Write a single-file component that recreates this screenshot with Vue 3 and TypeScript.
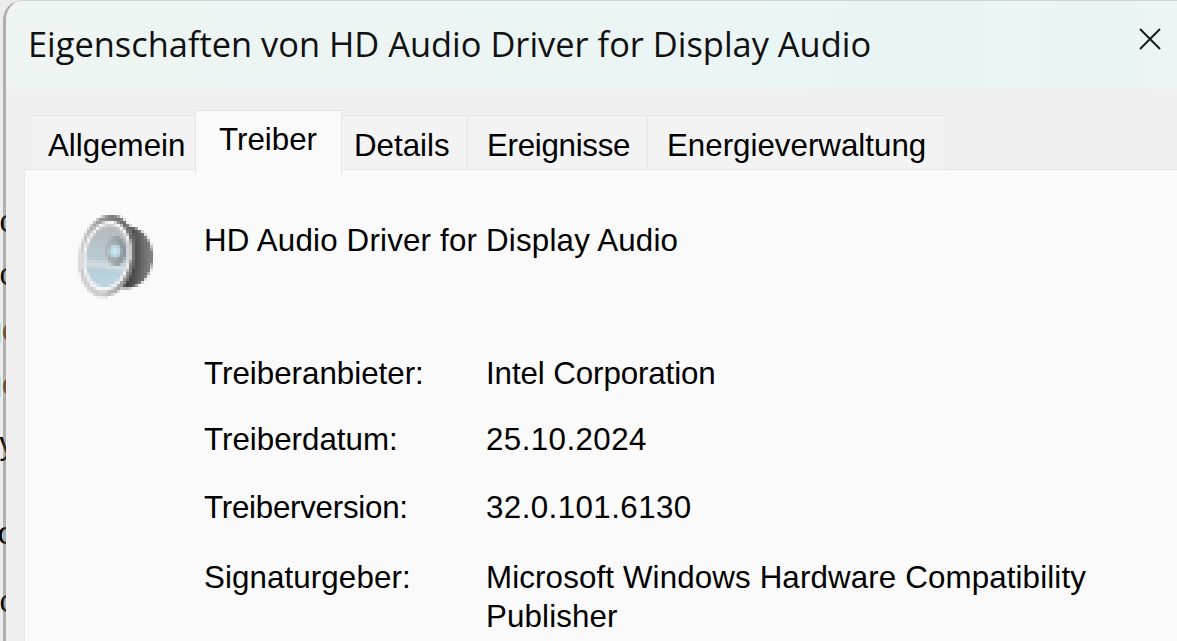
<script setup lang="ts">
interface InfoRow {
  label: string
  value: string
  numeric?: boolean
}

interface TabItem {
  name: string
  width: number
  pad: number
}

interface Cell {
  x: number
  y: number
  fill: string
}

const tabs: TabItem[] = [
  { name: 'Allgemein', width: 166, pad: 17 },
  { name: 'Treiber', width: 147, pad: 23 },
  { name: 'Details', width: 127, pad: 12 },
  { name: 'Ereignisse', width: 181, pad: 19 },
  { name: 'Energieverwaltung', width: 299, pad: 19 }
]
const activeTab = 'Treiber'

const rows: InfoRow[] = [
  { label: 'Treiberanbieter:', value: 'Intel Corporation' },
  { label: 'Treiberdatum:', value: '25.10.2024', numeric: true },
  { label: 'Treiberversion:', value: '32.0.101.6130', numeric: true },
  { label: 'Signaturgeber:', value: 'Microsoft Windows Hardware Compatibility Publisher' }
]

// text of the window behind, only its last pixels show
const behind = [
  { ch: 'c', top: 202 },
  { ch: 'c', top: 255 },
  { ch: 'o', top: 311, faint: true },
  { ch: 'o', top: 365, faint: true },
  { ch: 'y', top: 424 },
  { ch: 'o', top: 514 },
  { ch: 'c', top: 582 }
]
const cyanMarks = [315, 369]

type Rgba = [number, number, number, number]

const mix = (a: number[], b: number[], t: number) => {
  const k = Math.min(1, Math.max(0, t))
  return a.map((v, i) => v + (b[i] - v) * k)
}

// speaker sampled at icon coordinates (the original is an upscaled 32px bitmap)
const speakerAt = (px: number, py: number): Rgba => {
  const dx = px - 29
  const dy = py - 44
  const rx = dx * Math.cos(0.17) + dy * Math.sin(0.17)
  const ry = -dx * Math.sin(0.17) + dy * Math.cos(0.17)
  const r = Math.hypot(rx / 28, ry / 41.5)

  const capR = Math.hypot((px - 38) / 10, (py - 39) / 15)
  const spot = Math.hypot((px - 37) / 6, (py - 39) / 7)
  if (r < 0.75) {
    if (spot < 1) return [...mix([214, 238, 246], [176, 204, 216], spot), 255] as Rgba
    if (capR < 1) return [...mix([136, 146, 150], [172, 176, 180], 1 - (px - 30) / 18), 255] as Rgba
    const band = Math.exp(-Math.pow((py - 53 - (px - 25) * 0.12) / 3.5, 2)) * 0.6
    const base = mix([182, 186, 190], [186, 214, 226], (py - 15) / 60)
    return [...mix(base, [226, 232, 234], band), 255] as Rgba
  }
  if (r < 0.85) return [...mix([236, 238, 240], [250, 250, 250], (r - 0.75) / 0.1), 255] as Rgba
  if (r < 1) {
    const side = (px - 2 + (22 - py) * 0.35) / 46
    return [...mix([204, 204, 204], [112, 112, 112], side), 255] as Rgba
  }
  const back = Math.hypot((px - 48) / 27, (py - 45) / 31)
  if (back < 1) {
    const step = Math.floor((px - 46) / 6)
    const shade = mix([56, 56, 56], [128, 128, 128], step / 4 + (back - 0.6) * 0.3)
    return [...shade, 255] as Rgba
  }
  return [250, 250, 250, 0]
}

const cellSize = 3
const speakerCells: Cell[] = []
for (let y = 0; y < 29; y++) {
  for (let x = 0; x < 26; x++) {
    let sum = [0, 0, 0, 0]
    for (const sy of [0.5, 1.5, 2.5]) {
      for (const sx of [0.5, 1.5, 2.5]) {
        const c = speakerAt(x * cellSize + sx, y * cellSize + sy)
        sum = [sum[0] + c[0] * (c[3] ? 1 : 0), sum[1] + c[1] * (c[3] ? 1 : 0), sum[2] + c[2] * (c[3] ? 1 : 0), sum[3] + (c[3] ? 1 : 0)]
      }
    }
    if (sum[3] === 0) continue
    const n = sum[3]
    // blend partly covered cells with the panel colour
    const col = mix([250, 250, 250], [sum[0] / n, sum[1] / n, sum[2] / n], n / 9)
    speakerCells.push({
      x: x * cellSize,
      y: y * cellSize,
      fill: `rgb(${col.map((v) => Math.round(v)).join(',')})`
    })
  }
}
</script>

<template>
  <div class="screen">
    <div class="backdrop">
      <span
        v-for="(b, i) in behind"
        :key="i"
        class="behind-char"
        :class="{ faint: b.faint }"
        :style="{ top: b.top + 'px' }"
      >{{ b.ch }}</span>
      <span v-for="m in cyanMarks" :key="m" class="cyan-mark" :style="{ top: m + 'px' }"></span>
    </div>
    <div class="dialog">
      <header class="titlebar">
        <h1 class="title">Eigenschaften von HD Audio Driver for Display Audio</h1>
        <svg class="close" width="22" height="22" viewBox="0 0 22 22">
          <path d="M1 1 L21 21 M21 1 L1 21" stroke="#1a1a1a" stroke-width="2" fill="none" />
        </svg>
      </header>
      <div class="dialog-body">
        <div class="tabs">
          <div
            v-for="tab in tabs"
            :key="tab.name"
            class="tab"
            :class="{ active: tab.name === activeTab }"
            :style="{ width: tab.width + 'px', paddingLeft: tab.pad + 'px' }"
          >
            {{ tab.name }}
          </div>
        </div>
        <section class="panel">
          <div class="device">
            <svg class="speaker" width="78" height="87" viewBox="0 0 78 87" shape-rendering="crispEdges">
              <rect
                v-for="(c, i) in speakerCells"
                :key="i"
                :x="c.x"
                :y="c.y"
                width="3"
                height="3"
                :fill="c.fill"
              />
            </svg>
            <div class="device-name">HD Audio Driver for Display Audio</div>
          </div>
          <div class="info">
            <div v-for="row in rows" :key="row.label" class="info-row">
              <div class="info-label">{{ row.label }}</div>
              <div class="info-value" :class="{ numeric: row.numeric }">{{ row.value }}</div>
            </div>
          </div>
        </section>
      </div>
    </div>
  </div>
</template>

<style scoped>
.screen {
  position: relative;
  width: 1177px;
  height: 641px;
  overflow: hidden;
  background: #ececec;
  font-family: "Liberation Sans", Arial, sans-serif;
  color: #000;
}

.backdrop {
  position: absolute;
  left: 0;
  top: 0;
  width: 6px;
  height: 641px;
}

.behind-char {
  position: absolute;
  right: -9px;
  font-size: 31px;
  line-height: 40px;
  color: #000;
}

.behind-char.faint {
  right: -13px;
  color: #7a4a1e;
}

.cyan-mark {
  position: absolute;
  left: 0;
  width: 1px;
  height: 20px;
  margin-top: 8px;
  background: #a8e4e4;
}

.dialog {
  position: relative;
  margin-left: 3px;
  height: 641px;
  box-sizing: border-box;
  border-left: 3px solid rgba(90, 90, 90, 0.42);
  border-top: 1px solid #d4d4d4;
  border-top-left-radius: 20px;
  background-clip: padding-box;
  overflow: hidden;
  background-color: #efefef;
  display: flex;
  flex-direction: column;
}

.titlebar {
  height: 88px;
  flex-shrink: 0;
  background: linear-gradient(90deg, #eef5f3 0%, #e9f5f5 80%, #ecf4f5 100%);
  display: flex;
  align-items: center;
  justify-content: space-between;
  padding: 0 16px 0 22px;
}

.title {
  margin: -3px 0 0;
  font-family: "Open Sans", "Noto Sans", sans-serif;
  font-size: 34.4px;
  font-weight: 400;
  color: #111;
  white-space: nowrap;
}

.close {
  margin-bottom: 12px;
}

.dialog-body {
  flex: 1;
  padding: 21px 0 0 18px;
  display: flex;
  flex-direction: column;
  min-height: 0;
}

.tabs {
  display: flex;
  height: 60px;
  flex-shrink: 0;
  padding-left: 6px;
  align-items: flex-end;
  position: relative;
  z-index: 1;
  margin-bottom: -1px;
}

.tab {
  box-sizing: border-box;
  height: 54px;
  margin-bottom: 1px;
  padding-top: 10px;
  font-size: 31.3px;
  line-height: 40px;
  background: #f3f3f3;
  border: 1px solid #e6e6e6;
  border-bottom: none;
  white-space: nowrap;
}

.tab + .tab {
  margin-left: -1px;
}

.tab:nth-child(4) {
  letter-spacing: -0.3px;
}

.tab.active {
  height: 65px;
  margin-bottom: -5px;
  padding-top: 9px;
  background: #fafafa;
  position: relative;
  z-index: 2;
}

.panel {
  flex: 1;
  background: #fafafa;
  border-top: 1px solid #e4e4e4;
  border-left: 1px solid #e8e8e8;
  padding: 42px 0 0 53px;
  font-size: 31.3px;
  line-height: 39px;
}

.device {
  display: flex;
  align-items: flex-start;
  height: 142px;
}

.speaker {
  flex-shrink: 0;
  width: 78px;
  height: 87px;
  margin-right: 48px;
}

.device-name {
  margin-top: 9px;
  white-space: nowrap;
  letter-spacing: 0.19px;
}

.info {
  margin-left: 126px;
  display: flex;
  flex-direction: column;
}

.info-row {
  display: grid;
  grid-template-columns: 282px 640px;
}

.info-row:nth-child(2) {
  margin-top: 27px;
}

.info-row:nth-child(3) {
  margin-top: 29px;
}

.info-row:nth-child(4) {
  margin-top: 31px;
}

.info-row:nth-child(3) .info-label {
  letter-spacing: -0.25px;
}

.info-row:nth-child(4) .info-label {
  letter-spacing: 0.1px;
}

.info-value {
  letter-spacing: 0.13px;
}

.info-row:first-child .info-value {
  letter-spacing: -0.1px;
}

.info-value.numeric {
  letter-spacing: 0.42px;
}
</style>

<style>
html,
body {
  margin: 0;
  background: #efefef;
}
</style>
